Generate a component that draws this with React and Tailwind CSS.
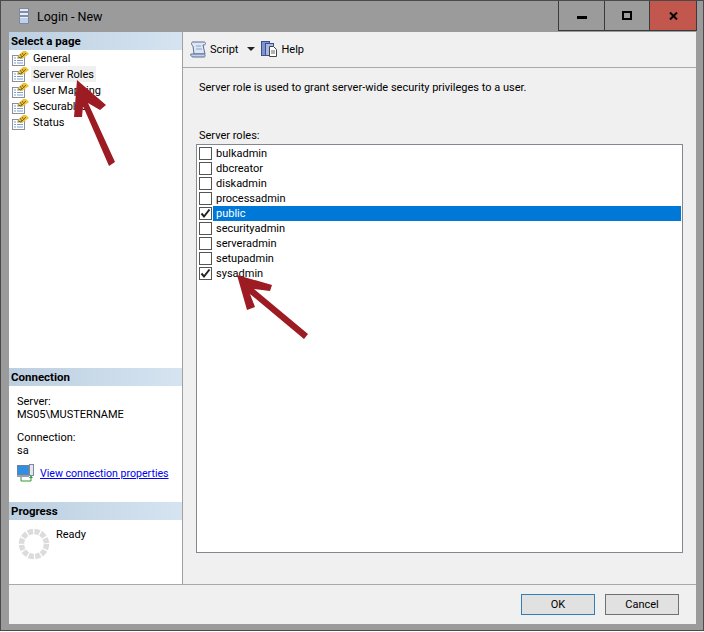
import React from "react";

const ROLES = [
  { name: "bulkadmin" },
  { name: "dbcreator" },
  { name: "diskadmin" },
  { name: "processadmin" },
  { name: "public", checked: true, selected: true },
  { name: "securityadmin" },
  { name: "serveradmin" },
  { name: "setupadmin" },
  { name: "sysadmin", checked: true },
];

const PAGES = ["General", "Server Roles", "User Mapping", "Securables", "Status"];

function PageIcon() {
  return (
    <svg width="17" height="15" viewBox="0 0 17 15" className="shrink-0">
      <rect x="0.500" y="4.500" width="12" height="10" fill="#fff" stroke="#8a8f9c" />
      <path d="M2 7h2M5 7h6M2 9.500h2M5 9.500h6M2 12h2M5 12h6" stroke="#7f9cc9" />
      <path d="M5 6 11 0h3l3 3-7 5z" fill="#f2c230" />
      <path d="M6 6l3 1 5-5M8 3l2 3M10 2l2 3" stroke="#6f6a40" fill="none" />
    </svg>
  );
}

function SectionHeader({ children }) {
  return (
    <div className="h-[18px] flex items-center pl-[2px] font-bold text-[11.500px] text-black bg-gradient-to-r from-[#bccfe0] to-[#d6e4f1]">
      {children}
    </div>
  );
}

function Check({ checked }) {
  return (
    <div className="w-[13px] h-[13px] border border-[#555] bg-white flex items-center justify-center shrink-0">
      {checked && (
        <svg width="11" height="11" viewBox="0 0 11 11">
          <path d="M1.500 5.500 4 8.500 9.500 1.500" fill="none" stroke="#222" strokeWidth="2" />
        </svg>
      )}
    </div>
  );
}

function Spinner() {
  return (
    <svg width="32" height="32" viewBox="0 0 32 32" className="shrink-0">
      <circle cx="16" cy="16" r="12.500" fill="none" stroke="#dcdcdc" strokeWidth="5.500" strokeDasharray="5.200 1.345" />
    </svg>
  );
}

function ServerIcon() {
  return (
    <svg width="10" height="16" viewBox="0 0 10 16">
      <rect x="0.500" y="0.500" width="9" height="15" fill="#e8edf5" stroke="#7f8aa0" />
      <path d="M1 4h8M1 8h8" stroke="#5f6f8f" strokeWidth="1.500" />
      <rect x="1" y="10" width="8" height="5" fill="#bcd0ee" />
    </svg>
  );
}

function ConnIcon() {
  return (
    <svg width="17" height="18" viewBox="0 0 17 18" className="shrink-0">
      <rect x="0.500" y="1.500" width="11" height="9" fill="#2f8fe0" stroke="#6f7f9f" />
      <rect x="0" y="11" width="12" height="2" fill="#8f9fbf" />
      <rect x="12.500" y="0.500" width="4" height="11" fill="#dfe6f0" stroke="#7f8aa0" />
      <path d="M4 13v4h10v-4" fill="none" stroke="#2f9a2f" />
      <path d="M12 14l2-2.500 2 2.500z" fill="#2f9a2f" />
    </svg>
  );
}

function ScriptIcon() {
  return (
    <svg width="18" height="17" viewBox="0 0 18 17" className="shrink-0">
      <path d="M3 1h11c2 0 2 3 0 3h-1l2 9H4L3 5C1 4 1 1 3 1z" fill="#dde6f4" stroke="#5c6f94" />
      <path d="M1 13h13c1 0 2 3 0 3H3c-2 0-3-3-2-3z" fill="#c3d2ea" stroke="#5c6f94" />
      <path d="M6 5h5M6 8h6" stroke="#8fa0c0" />
    </svg>
  );
}

function HelpIcon() {
  return (
    <svg width="16" height="16" viewBox="0 0 16 16" className="shrink-0">
      <rect x="0.500" y="0.500" width="8" height="14" fill="#7f93d0" stroke="#3f4f8f" />
      <rect x="4.500" y="2.500" width="8" height="12" fill="#a8b8e4" stroke="#3f4f8f" />
      <path d="M8.500 5.500h4l3 3v7h-7z" fill="#fff" stroke="#444" />
      <path d="M10 10h4M10 12h4" stroke="#666" />
    </svg>
  );
}

function Arrows() {
  // the red annotation arrows drawn over the dialog
  return (
    <svg width="704" height="632" viewBox="0 0 704 632" className="absolute left-0 top-0 pointer-events-none">
      <path d="M77 80 106 105 100 110 88 103 115 162 109 166 83 106 82 117 74 117z" fill="#9d1b22" />
      <path d="M237 275 272 285 270 291 254 289 308 334 304 339 250 294 255 307 247 310z" fill="#9d1b22" />
    </svg>
  );
}

export default function App() {
  return (
    <div
      className="relative w-[704px] h-[632px] bg-white text-[11px] leading-[13px] text-black"
      style={{ fontFamily: 'Roboto, "Liberation Sans", Arial, sans-serif' }}
    >
      <div className="w-full h-[631px] bg-[#9b9b9b] border border-[#4a4a4a] flex flex-col">
        <div className="h-[30px] flex items-start shrink-0 relative">
          <div className="flex items-center gap-[8px] pl-[18px] pt-[7px] flex-1 text-[12.500px]">
            <ServerIcon />
            <span>Login - New</span>
          </div>
          <div className="flex h-[30px] mr-[6px] border-b border-x border-[#3a3a3a]">
            <div className="w-[46px] flex items-center justify-center border-r border-[#3a3a3a]">
              <div className="w-[10px] h-[3px] bg-black mt-[4px]" />
            </div>
            <div className="w-[45px] flex items-center justify-center border-r border-[#3a3a3a]">
              <div className="w-[10px] h-[9px] border-2 border-black" />
            </div>
            <div className="w-[46px] flex items-center justify-center bg-[#c1574d]">
              <svg width="9" height="8" viewBox="0 0 9 8">
                <path d="M1 0.500 8 7.500M8 0.500 1 7.500" stroke="#000" strokeWidth="2" />
              </svg>
            </div>
          </div>
        </div>

        <div className="flex-1 ml-[8px] mr-[7px] mb-[6px] mt-[1px] flex flex-col bg-[#f0f0f0] min-h-0">
          <div className="flex flex-1 min-h-0 border-b border-[#a9a9a9]">
            <div className="w-[174px] shrink-0 bg-white border-r border-[#a0a0a0] flex flex-col">
              <SectionHeader>Select a page</SectionHeader>
              <div className="pl-[3px] h-[318px] flex flex-col">
                {PAGES.map((page) => (
                  <div key={page} className="h-[16px] flex items-center gap-[2px]">
                    <PageIcon />
                    <span
                      className={
                        page === "Server Roles"
                          ? "bg-[#f0f0f0] h-[16px] flex items-center pl-[2px] pr-[3px] w-[65px] whitespace-nowrap"
                          : "pl-[2px] whitespace-nowrap"
                      }
                    >
                      {page}
                    </span>
                  </div>
                ))}
              </div>
              <SectionHeader>Connection</SectionHeader>
              <div className="pl-[8px] pt-[9px] h-[116px] flex flex-col">
                <div>Server:</div>
                <div>MS05\MUSTERNAME</div>
                <div className="mt-[10px]">Connection:</div>
                <div>sa</div>
                <div className="flex items-center gap-[6px] mt-[7px]">
                  <ConnIcon />
                  <span className="text-[10.600px] text-[#0000ee] underline whitespace-nowrap">View connection properties</span>
                </div>
              </div>
              <SectionHeader>Progress</SectionHeader>
              <div className="pl-[9px] pt-[8px] flex gap-[6px]">
                <Spinner />
                <span>Ready</span>
              </div>
            </div>

            <div className="flex-1 flex flex-col min-w-0">
              <div className="h-[36px] shrink-0 border-b border-[#a9a9a9] flex items-center pl-[7px] pb-[1px]">
                <ScriptIcon />
                <span className="ml-[2px]">Script</span>
                <div className="ml-[9px] w-0 h-0 border-x-[4px] border-x-transparent border-t-[4px] border-t-[#222]" />
                <span className="ml-[6px]"><HelpIcon /></span>
                <span className="ml-[4px]">Help</span>
              </div>
              <div className="flex-1 flex flex-col pl-[16px] pr-[13px] pt-[13px] pb-[31px] min-h-0">
                <div>Server role is used to grant server-wide security privileges to a user.</div>
                <div className="mt-[35px] mb-[2px]">Server roles:</div>
                <div className="-ml-[3px] flex-1 bg-white border border-[#828790] pt-[1px] pl-[2px] pr-[1px]">
                  {ROLES.map((role) => (
                    <div key={role.name} className="h-[15px] flex items-center">
                      <Check checked={role.checked} />
                      <span
                        className={
                          "ml-[1px] flex-1 pl-[3px] h-[15px] flex items-center " +
                          (role.selected ? "bg-[#0078d7] text-white" : "")
                        }
                      >
                        {role.name}
                      </span>
                    </div>
                  ))}
                </div>
              </div>
            </div>
          </div>
          <div className="h-[39px] shrink-0 flex items-center justify-end gap-[10px] pr-[17px]">
            <button className="w-[74px] h-[21px] bg-[#e1e1e1] border border-[#2f7fb8]">OK</button>
            <button className="w-[74px] h-[21px] bg-[#e1e1e1] border border-[#707070]">Cancel</button>
          </div>
        </div>
      </div>
      <Arrows />
    </div>
  );
}
